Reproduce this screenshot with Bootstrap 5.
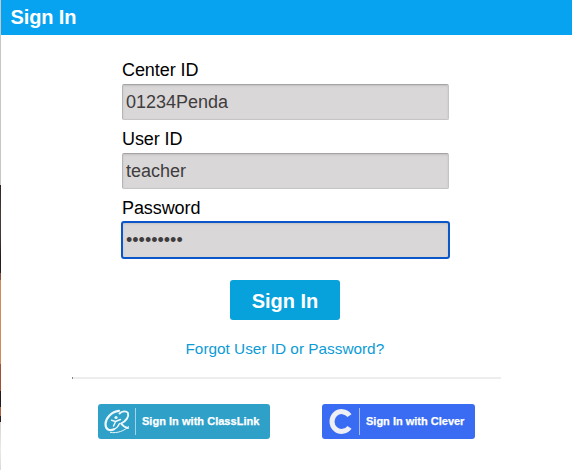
<!DOCTYPE html>
<html lang="en">
<head>
<meta charset="utf-8">
<meta name="viewport" content="width=device-width, initial-scale=1">
<title>Sign In</title>
<link href="https://cdn.jsdelivr.net/npm/bootstrap@5.3.0/dist/css/bootstrap.min.css" rel="stylesheet">
<style>
body{font-family:"Liberation Sans",Arial,sans-serif;color:#000;height:470px;overflow:hidden}
.edge{width:1px;background:linear-gradient(#c9c7c6 0 185px,#2e2224 185px,#4a3a3a 215px,#43383a 235px,#241a1c 258px,#2a1e1f 273px,#8a4f3c 273px 280px,#d18a5c 280px 364px,#9c5138 364px 391px,#241a1c 391px 407px,#b0613f 407px 416px,#2b1f20 416px 422px,#d8d3d3 422px,#ebe8e8 450px,#dcd9d9)}
.title-bar{height:35px;background:#07a3f0;font-size:20px;line-height:34px;padding-left:9.5px;letter-spacing:-.12px}
.login-form{width:327px;margin:23px 0 0 121px}
.form-label{font-size:18px;line-height:24px;height:24px;margin:0 0 2px;display:block;letter-spacing:-.08px}
.form-control{height:36px;padding:0 4px;margin-bottom:7px;font-size:18px;line-height:34px;color:#3f3c3d;background:#d9d7d8;border:1px solid #c6c4c5;border-top-color:#a5a3a4;border-left-color:#b5b3b4;border-radius:2px;box-shadow:inset 0 1px 2px #c2c0c1}
.form-control,.form-control:focus{padding-left:3px}
.form-control.active-field{margin-bottom:0;outline:2px solid #0b57c9;outline-offset:-1px;border-color:#c2c0c1}
.btn-signin{width:110px;height:40px;margin:22px 0 0 229px;padding:1px 0 0;font-size:20px;line-height:40px;border:0;border-radius:3px;background:#07a1dc;color:#fff}
.forgot{font-size:15.35px;line-height:20px;color:#0b9bd5;margin:19px 0 0 184.5px;white-space:nowrap;width:max-content}
.divider{width:429px;height:2px;margin:18px 0 0 71px;background:linear-gradient(90deg,#888 0 1px,#ededed 1px)}
.sso{margin:25px 0 0 97px;gap:52px}
.btn-sso{height:35px;padding:0;border:0;border-radius:3px;color:#fff;font-size:11px;line-height:35px;-webkit-text-stroke:.25px #fff}
.btn-classlink{width:172px;background:#2fa0c8;letter-spacing:.03px}
.btn-clever{width:153px;background:#396bf3}
.sso-mark{width:37px;height:35px;flex:none}
.sso-rule{width:1px;height:27px;background:#fff;opacity:.55;margin-right:6px}
</style>
<script src="https://cdn.jsdelivr.net/npm/bootstrap@5.3.0/dist/js/bootstrap.bundle.min.js"></script>
</head>
<body class="d-flex bg-white">
<div class="edge flex-shrink-0"></div>
<main class="flex-grow-1">
  <header class="title-bar text-white fw-bold">Sign In</header>
  <form>
    <div class="login-form">
      <label class="form-label" for="center">Center ID</label>
      <input class="form-control" id="center" type="text" value="01234Penda">
      <label class="form-label" for="user">User ID</label>
      <input class="form-control" id="user" type="text" value="teacher">
      <label class="form-label" for="password">Password</label>
      <input class="form-control active-field" id="password" type="password" value="password1">
    </div>
    <button class="btn btn-signin fw-bold d-block" type="button">Sign In</button>
  </form>
  <a class="forgot d-block text-decoration-none" href="#">Forgot User ID or Password?</a>
  <div class="divider"></div>
  <div class="sso d-flex">
    <a class="btn btn-sso btn-classlink fw-bold d-flex align-items-center" href="#">
      <svg class="sso-mark" viewBox="0 0 37 35" fill="none" stroke="#eef7fa" stroke-linecap="round" stroke-linejoin="round">
        <path d="M21 6.800C13.500 7.500 7.700 14 7.500 20C7.500 25.500 11.500 27.500 16 25.300" stroke-width="2.200"/>
        <path d="M16 25.300C19 24 20.500 22 21.500 19.500" stroke-width="1.300"/>
        <path d="M21.500 9.500C24 6.800 28.500 6.800 30 9C31 12.500 28.500 17 23 19.500C24.500 21.500 27 23.500 30 24" stroke-width="1.900"/>
        <path d="M13.500 16.200L17.500 17.500L22.500 15.500M17.500 17.800L15.500 22" stroke-width="1.500"/>
        <path d="M12.500 28.500C19 29.500 26.500 27 30.500 22.500" stroke-width="1"/>
        <circle cx="18" cy="13.500" r="1.600" fill="#eef7fa" stroke="none"/>
      </svg>
      <span class="sso-rule"></span><span>Sign In with ClassLink</span>
    </a>
    <a class="btn btn-sso btn-clever fw-bold d-flex align-items-center" href="#">
      <svg class="sso-mark" viewBox="0 0 37 35" fill="none" stroke="#eeeff5" stroke-width="5">
        <path d="M27.500 11.600A9.700 9.900 0 1 0 27.500 23.400"/>
      </svg>
      <span class="sso-rule"></span><span>Sign In with Clever</span>
    </a>
  </div>
</main>
</body>
</html>
